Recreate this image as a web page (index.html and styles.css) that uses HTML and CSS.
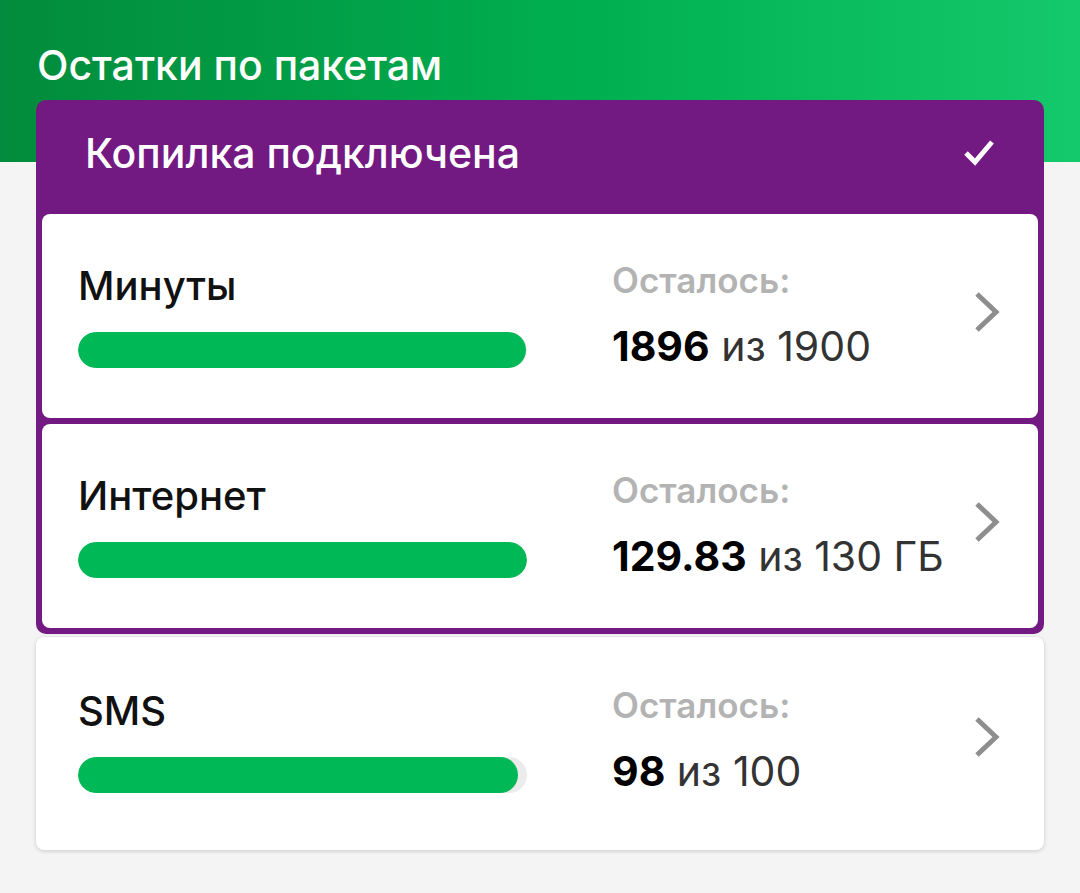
FILE: index.html
```html
<!DOCTYPE html>
<html lang="ru">
<head>
    <meta charset="UTF-8">
    <meta name="viewport" content="width=device-width, initial-scale=1.0">
    <title>Остатки по пакетам</title>
    <link rel="stylesheet" href="styles.css">
</head>
<body>
<h1 class="title">Остатки по пакетам</h1>

<div class="piggy">
    <div class="piggy-head">
        <span>Копилка подключена</span>
        <svg class="check" width="32" height="28" viewBox="0 0 32 28">
            <path d="M3 14 L12 23 L29 3" fill="none" stroke="#fff" stroke-width="5"/>
        </svg>
    </div>

    <div class="card">
        <div class="left">
            <div class="name">Минуты</div>
            <div class="bar"><div class="fill" style="width: 99.8%"></div></div>
        </div>
        <div class="right">
            <div class="label">Осталось:</div>
            <div class="value"><b>1896</b> из 1900</div>
        </div>
        <svg class="chevron" width="30" height="40" viewBox="0 0 30 40">
            <path d="M5 2 L24 20 L5 38" fill="none" stroke="#8e8e8e" stroke-width="5"/>
        </svg>
    </div>

    <div class="card">
        <div class="left">
            <div class="name">Интернет</div>
            <div class="bar"><div class="fill" style="width: 99.9%"></div></div>
        </div>
        <div class="right">
            <div class="label">Осталось:</div>
            <div class="value"><b>129.83</b> из 130 ГБ</div>
        </div>
        <svg class="chevron" width="30" height="40" viewBox="0 0 30 40">
            <path d="M5 2 L24 20 L5 38" fill="none" stroke="#8e8e8e" stroke-width="5"/>
        </svg>
    </div>
</div>

<div class="card card-single">
    <div class="left">
        <div class="name">SMS</div>
        <div class="bar"><div class="fill" style="width: 98%"></div></div>
    </div>
    <div class="right">
        <div class="label">Осталось:</div>
        <div class="value"><b>98</b> из 100</div>
    </div>
    <svg class="chevron" width="30" height="40" viewBox="0 0 30 40">
        <path d="M5 2 L24 20 L5 38" fill="none" stroke="#8e8e8e" stroke-width="5"/>
    </svg>
</div>

</body>
</html>
```

FILE: styles.css
```css
body {
    margin: 0;
    font-family: Inter, "Noto Sans", sans-serif;
    background: linear-gradient(90deg, #028b3c 0%, #00b050 55%, #14c96c 100%) no-repeat 0 0 / 100% 162px, #f4f4f4;
    min-height: 893px;
}

.title {
    margin: 0;
    padding: 43px 37px 0;
    font-size: 41px;
    line-height: 44px;
    font-weight: 500;
    color: white;
}

.piggy {
    margin: 13px 36px 0;
    background-color: #731982;
    border-radius: 10px;
    padding: 0 6px 6px;
    display: flex;
    flex-direction: column;
    gap: 6px;
}

.piggy-head {
    height: 108px;
    display: flex;
    align-items: center;
    justify-content: space-between;
    padding: 0 43px 2px 43px;
    box-sizing: border-box;
    font-size: 41px;
    font-weight: 500;
    color: white;
}

.card {
    display: flex;
    align-items: flex-start;
    height: 204px;
    box-sizing: border-box;
    padding: 46px 36px 0;
    background-color: white;
    border-radius: 8px;
}

.card-single {
    margin: 3px 36px 0;
    height: 213px;
    padding: 48px 42px 0;
    box-shadow: 0 1px 4px rgba(0, 0, 0, 0.18);
}

.left {
    width: 449px;
    padding-top: 5px;
}

.name {
    font-size: 40px;
    line-height: 42px;
    font-weight: 500;
    color: #111;
}

.bar {
    margin-top: 25px;
    height: 36px;
    border-radius: 18px;
    background-color: #ececec;
    overflow: hidden;
}

.fill {
    height: 100%;
    border-radius: 18px;
    background-color: #00b956;
}

.right {
    flex: 1;
    margin-left: 85px;
}

.label {
    font-size: 35px;
    line-height: 40px;
    font-weight: 600;
    color: #b3b3b3;
}

.value {
    margin-top: 26px;
    font-size: 41px;
    line-height: 40px;
    color: #333;
}

.value b {
    font-weight: 700;
    color: #000;
}

.chevron {
    margin-top: 32px;
}
```
